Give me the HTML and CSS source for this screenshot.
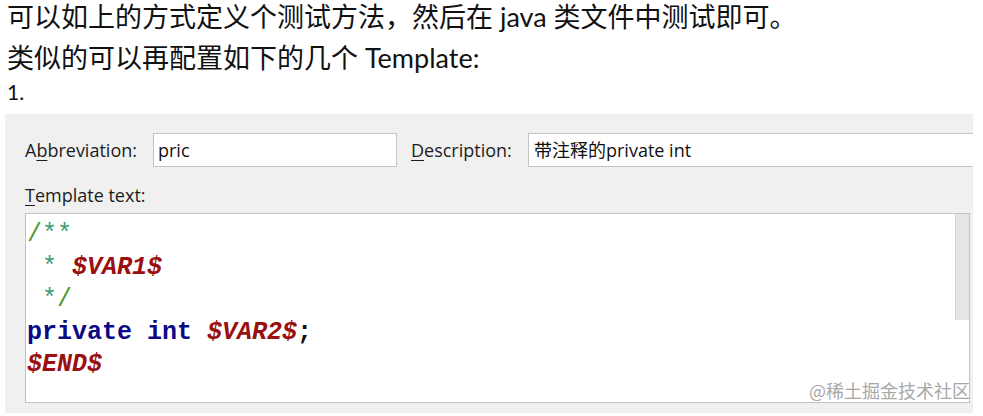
FILE: index.html
```html
<!DOCTYPE html>
<html lang="zh-CN">
<head>
<meta charset="utf-8">
<title>Template</title>
<link rel="stylesheet" href="styles.css">
</head>
<body>
<div class="article">
  <p class="para p1">可以如上的方式定义个测试方法，然后在 java 类文件中测试即可。</p>
  <p class="para p2">类似的可以再配置如下的几个 Template:</p>
  <p class="num">1.</p>
</div>
<div class="panel">
  <div class="row">
    <label class="lbl lbl-abbr">A<u>b</u>breviation:</label>
    <div class="input input-abbr">pric</div>
    <label class="lbl lbl-desc"><u>D</u>escription:</label>
    <div class="input input-desc">带注释的private int</div>
  </div>
  <div class="lbl lbl-tpl"><u>T</u>emplate text:</div>
  <div class="editor">
    <div class="code"><div class="ln"><span class="cs">/</span><span class="ca">**</span></div><div class="ln"> <span class="ca">*</span> <span class="var">$VAR1$</span></div><div class="ln"> <span class="ca">*</span><span class="cs">/</span></div><div class="ln"><span class="kw">private</span> <span class="kw">int</span> <span class="var">$VAR2$</span>;</div><div class="ln"><span class="var">$END$</span></div></div>
    <div class="scroll"><div class="thumb"></div></div>
  </div>
</div>
<div class="watermark">@稀土掘金技术社区</div>
</body>
</html>
```

FILE: styles.css
```css
html, body {
  margin: 0;
  padding: 0;
  background: #ffffff;
}
body {
  width: 983px;
  height: 416px;
  overflow: hidden;
  position: relative;
  font-family: Lato, "Noto Sans CJK SC", sans-serif;
  color: #111111;
}
.article {
  padding: 0 7px;
  margin-top: -1px;
}
.para {
  margin: 0;
  font-size: 27px;
  line-height: 36px;
  white-space: nowrap;
}
.p1 {
  margin-bottom: 5px;
}
.p2 {
  margin-bottom: 3px;
}
.num {
  margin: 0;
  font-size: 21px;
  line-height: 26px;
  height: 26px;
}
.panel {
  margin: 9px 0 0 5px;
  width: 968px;
  height: 299px;
  background: #f0f0f0;
  box-sizing: border-box;
  padding: 19px 0 10px 20px;
  overflow: hidden;
  font-family: "Open Sans", "Noto Sans CJK SC", sans-serif;
}
.row {
  display: flex;
  align-items: center;
  height: 34px;
  white-space: nowrap;
}
.lbl {
  font-size: 18px;
  color: #1c1c1c;
  line-height: 24px;
}
.lbl u {
  text-decoration-thickness: 1px;
  text-underline-offset: 3px;
}
.lbl-abbr {
  width: 128px;
  flex: none;
}
.lbl-desc {
  width: 117px;
  flex: none;
}
.input {
  flex: none;
  box-sizing: border-box;
  height: 34px;
  background: #ffffff;
  border: 1px solid #c4c4c4;
  font-size: 18px;
  line-height: 32px;
  padding-left: 4px;
  color: #111111;
}
.input-abbr {
  width: 244px;
  margin-right: 14px;
}
.input-desc {
  width: 460px;
  padding-left: 5px;
}
.lbl-tpl {
  margin-top: 16px;
  height: 24px;
  margin-bottom: 6px;
}
.editor {
  display: flex;
  width: 945px;
  height: 190px;
  box-sizing: border-box;
  border: 1px solid #c2c2c2;
  background: #ffffff;
}
.code {
  flex: 1;
  padding: 5px 0 0 1px;
  font-family: "Liberation Mono", "DejaVu Sans Mono", monospace;
  font-weight: bold;
  font-size: 25px;
  line-height: 32.5px;
  color: #111111;
  white-space: pre;
}
.ln {
  height: 32.5px;
}
.cs {
  color: #4f9a2c;
  font-weight: normal;
}
.ca {
  color: #3c9c74;
  font-weight: normal;
}
.kw {
  color: #0a0a84;
}
.var {
  color: #9a1010;
  font-style: italic;
}
.scroll {
  width: 14px;
  flex: none;
}
.thumb {
  height: 106px;
  background: #e6e6e6;
  border-left: 1px solid #d6d6d6;
}
.watermark {
  position: absolute;
  right: 13px;
  top: 378px;
  font-family: "Noto Sans CJK SC", sans-serif;
  font-size: 18px;
  line-height: 24px;
  color: #a8a8a8;
  white-space: nowrap;
}
```
